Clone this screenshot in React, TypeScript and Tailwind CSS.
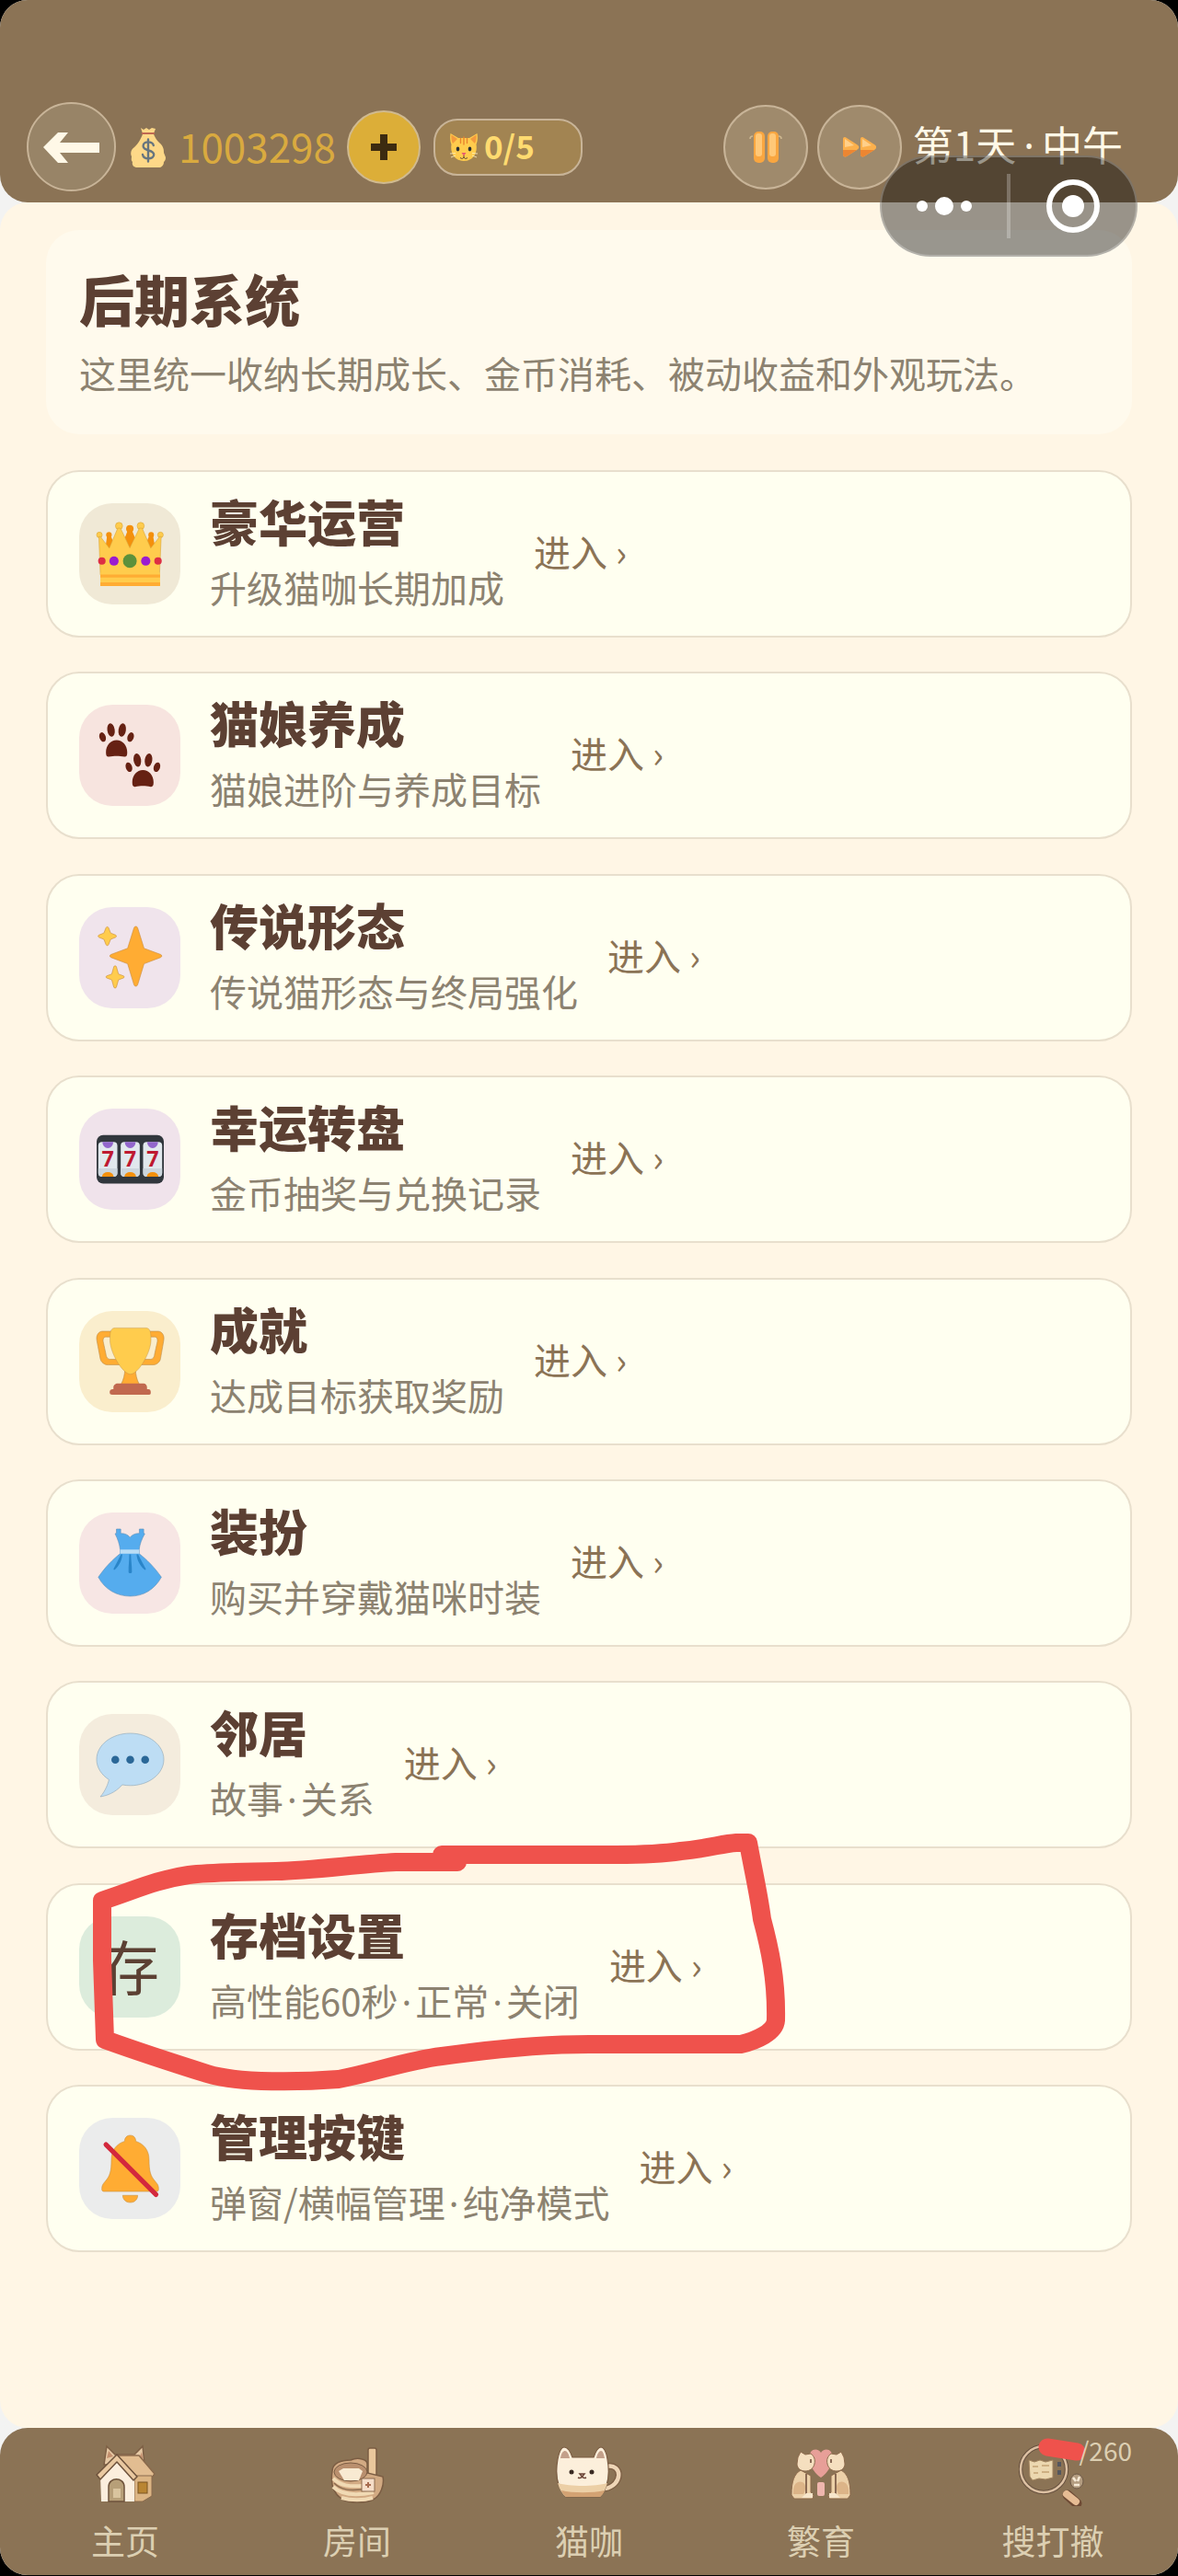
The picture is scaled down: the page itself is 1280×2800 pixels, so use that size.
import { Fragment, type ReactNode } from "react";

const Crown = () => (
  <svg viewBox="0 0 36 36" className="size-[73px] overflow-visible" aria-hidden="true">
    <g fill="#f4900c">
      <circle cx="6.6" cy="7.6" r="1.5" />
      <circle cx="17.8" cy="4.3" r="2" />
      <circle cx="29.2" cy="7.6" r="1.5" />
      <path d="M5.6 8h2l3 8H4.500zM16.700 5h2.200l4.500 11H12.500zM28.200 8h2l1.500 8h-7z" />
    </g>
    <g fill="#ffcc4d" stroke="#d9a63c" strokeWidth=".3">
      <circle cx="1.500" cy="7.600" r="1.500" />
      <circle cx="12" cy="2.800" r="1.900" />
      <circle cx="23.600" cy="2.800" r="1.900" />
      <circle cx="34.200" cy="7.600" r="1.500" />
      <path d="M1.200 8.500h.8l4.800 6.200L11.300 4h1.500l5 10.600L22.900 4h1.500l4.600 10.700 4.800-6.200h.8L33.700 29H2z" />
    </g>
    <rect x="2" y="27.500" width="32" height="7.500" rx=".8" fill="#ffcc4d" />
    <path d="M2 28.800h32v1.600H2zM2 33h32v2H2z" fill="#ffac33" />
    <g>
      <circle cx="2.800" cy="21.600" r="2" fill="#dd2e44" />
      <circle cx="9.300" cy="21.600" r="2.500" fill="#9b1bd0" />
      <circle cx="17.800" cy="21.600" r="3.700" fill="#5c913b" />
      <circle cx="26.300" cy="21.600" r="2.500" fill="#9b1bd0" />
      <circle cx="32.900" cy="21.600" r="2" fill="#dd2e44" />
    </g>
  </svg>
);

const PawPrint = () => (
  <>
    <ellipse cx="3.200" cy="8" rx="1.700" ry="2.600" transform="rotate(-18 3.200 8)" />
    <ellipse cx="7.700" cy="4.200" rx="2" ry="3.600" transform="rotate(-8 7.700 4.200)" />
    <ellipse cx="13.700" cy="4.200" rx="2" ry="3.600" transform="rotate(8 13.700 4.200)" />
    <ellipse cx="18.200" cy="8" rx="1.700" ry="2.600" transform="rotate(18 18.200 8)" />
    <path d="M10.700 9.600c-3.200 0-5.700 2.800-5.700 6.500 0 1.800.4 2.500 1.500 2.400 1.500-.1 2.700-.4 4.200-.4s2.700.3 4.200.4c1.100.1 1.500-.6 1.500-2.400 0-3.700-2.500-6.500-5.700-6.500z" />
  </>
);

const Paws = () => (
  <svg viewBox="0 0 36 36" className="size-[73px]" fill="#662113" aria-hidden="true">
    <PawPrint />
    <g transform="translate(14.100 16.100)">
      <PawPrint />
    </g>
  </svg>
);

const Sparkles = () => (
  <svg viewBox="0 0 36 36" className="size-[73px]" aria-hidden="true">
    <path
      fill="#ffac33"
      stroke="#c98a3a"
      strokeWidth=".3"
      d="M34.300 16.500l-8.900-3.300-3.400-10.900c-.3-1.100-1.700-1.100-2 0l-3.400 10.900-8.900 3.300c-.8.300-.8 1.300 0 1.600l8.900 3.400 3.400 11.200c.3 1.100 1.700 1.100 2 0l3.400-11.200 8.900-3.400c.8-.3.800-1.300 0-1.600z"
    />
    <g fill="#ffcc4d" stroke="#c98a3a" strokeWidth=".3">
      <path d="M10.200 6.100L7.500 5 6.400 2.200c-.3-.7-1.100-.7-1.400 0L3.900 5 1.200 6.100c-.5.200-.5 1 0 1.200l2.700 1.100L5 11.200c.3.700 1.100.7 1.400 0l1.100-2.800 2.700-1.100c.5-.2.500-1 0-1.200z" />
      <path d="M14.400 28l-2.700-1-1.100-3.900c-.2-.7-1.200-.7-1.400 0l-1.100 3.900-2.700 1c-.5.200-.5.900 0 1.100l2.700 1 1.100 3.900c.2.700 1.200.7 1.400 0l1.100-3.900 2.700-1c.5-.2.500-.9 0-1.100z" />
    </g>
  </svg>
);

const SlotReel = ({ x }: { x: number }) => (
  <g transform={`translate(${x} 8.500)`}>
    <rect width="10.200" height="18.600" rx="2" fill="#e1e8ed" />
    <path d="M0 14.200h10.200v2.400a2 2 0 0 1-2 2H2a2 2 0 0 1-2-2z" fill="#ccd6dd" />
    <path d="M2.200 0h5.800a2.900 3.300 0 0 1-5.800 0z" fill="#9266cc" />
    <path d="M2 18.600a3.100 2.400 0 0 1 6.200 0z" fill="#f4900c" />
    <text x="5.100" y="13.400" textAnchor="middle" fontSize="11.500" fontWeight="700" fill="#be1931" fontFamily="Open Sans, sans-serif">
      7
    </text>
  </g>
);

const Slots = () => (
  <svg viewBox="0 0 36 36" className="size-[73px]" aria-hidden="true">
    <rect y="4.800" width="36" height="26" rx="3.500" fill="#31373d" />
    <SlotReel x={0.9} />
    <SlotReel x={12.9} />
    <SlotReel x={24.9} />
  </svg>
);

const Trophy = () => (
  <svg viewBox="0 0 36 36" className="size-[73px] overflow-visible" aria-hidden="true">
    <path
      fill="#ffac33"
      stroke="#b98b4a"
      strokeWidth=".3"
      d="M5.123 5h6C12.227 5 13 4.896 13 6V4c0-1.104-.773-2-1.877-2h-8c-2 0-3.583 2.125-3 5 0 0 1.791 9.375 1.917 9.958C2.373 18.500 4.164 20 6.081 20h6.958c1.105 0-.039-1.896-.039-3v-2c0 1.104-.773 2-1.877 2h-4c-1.104 0-1.833-1.042-2-2S3.539 7.667 3.539 7.667C3.206 5.750 4.018 5 5.123 5zm25.812 0h-6C23.831 5 22 4.896 22 6V4c0-1.104 1.831-2 2.935-2h8c2 0 3.584 2.125 3 5 0 0-1.633 9.419-1.771 10-.354 1.500-2.042 3-4 3h-7.146C21.914 20 22 18.104 22 17v-2c0 1.104 1.831 2 2.935 2h4c1.104 0 1.834-1.042 2-2s1.584-7.333 1.584-7.333C32.851 5.750 32.040 5 30.935 5zM20.832 22c0-6.958-2.709 0-2.709 0s-3-6.958-3 0-3.291 10-3.291 10h12.292S20.832 28.958 20.832 22z"
    />
    <path
      fill="#ffcc4d"
      stroke="#b98b4a"
      strokeWidth=".2"
      d="M29.123 6.577c0 6.775-6.770 18.423-11 18.423-4.231 0-11-11.649-11-18.423C7.123 1.200 8 .2 10.123.2h16c2.100 0 3 1 3 6.377z"
    />
    <path
      fill="#c1694f"
      d="M27 33.500H9V32c0-1.104 1.164-2 2.206-2h13.917C26.165 30 27 30.896 27 32zM29 34.625c0 .76.165 1.375-1.252 1.375H8.498C7.206 36 7 35.385 7 34.625v-.25C7 33.615 7.738 33 8.498 33h19.250c.759 0 1.252.615 1.252 1.375z"
    />
  </svg>
);

const Dress = () => (
  <svg viewBox="0 0 36 36" className="size-[73px] overflow-visible" aria-hidden="true">
    <path
      fill="#55acee"
      stroke="#5b8fb8"
      strokeWidth=".3"
      d="M10.600 0h2.300v2.300c2.300 0 4 .8 5 2.200 1-1.400 2.700-2.200 5-2.200V0h2.300v2.200l.6.3c-1.700 3.100-2.700 5.600-3 8.500v2.200C27 16.500 31 20.500 34.700 25.800 31 32.500 25 36 18 36S4.500 32.500.9 25.800C4.500 20.500 8.500 16.500 12.600 13.200V11c-.3-2.900-1.200-5.400-2.700-8.500l.7-.3z"
    />
    <path fill="#bbddf5" d="M12.600 11h10.200v2.200H12.600z" />
    <path
      fill="#2a85c9"
      d="M13.800 13.500c-.3 3.500-1.800 6-4 8.200-.5.500-.9 0-.6-.6 1.300-2.500 2.600-5 3.800-7.600zM17.500 13.500h.9c0 3.500.6 6 .5 9.500 0 .9-1.800.9-1.800 0-.1-3.500.4-6 .4-9.500zM22.200 13.500H21.400c.3 3.500 1.900 6 4.200 8.200.5.500 1 0 .6-.6-1.300-2.500-2.700-5-4-7.600z"
    />
  </svg>
);

const Bubble = () => (
  <svg viewBox="0 0 36 36" className="size-[73px] overflow-visible" aria-hidden="true">
    <path
      fill="#bdddf4"
      stroke="#8fa6b5"
      strokeWidth=".3"
      d="M18 1C8.059 1 0 7.268 0 15c0 4.368 2.574 8.268 6.604 10.835C6.080 28.144 4.859 31.569 2 35c5.758-.96 9.439-3.761 11.716-6.416 1.376.262 2.805.416 4.284.416 9.941 0 18-6.268 18-14S27.941 1 18 1z"
    />
    <g fill="#2a6797">
      <circle cx="10" cy="15.200" r="2.100" />
      <circle cx="18" cy="15.200" r="2.100" />
      <circle cx="26" cy="15.200" r="2.100" />
    </g>
  </svg>
);

const BellOff = () => (
  <svg viewBox="0 0 36 36" className="size-[73px] overflow-visible" aria-hidden="true">
    <g fill="#ffac33" stroke="#c99245" strokeWidth=".3">
      <path d="M18 0c-1.900 0-3 1.400-3 3.200C10.800 4.500 7.900 8 7.900 13c0 6.500-.8 8.800-3.300 11.700C3.200 26.300 2.800 27 2.800 28.800c0 .9.400 1.300 1.200 1.300h28c.8 0 1.200-.4 1.200-1.300 0-1.800-.4-2.500-1.800-4.100-2.500-2.900-3.300-5.200-3.300-11.700 0-5-2.900-8.500-7.100-9.800C21 1.400 19.900 0 18 0z" />
      <path d="M14 32.200h8c0 2.200-1.600 3.800-4 3.800s-4-1.600-4-3.800z" />
    </g>
    <path d="M5 5l26.800 26.800" stroke="#d3293d" strokeWidth="2.600" strokeLinecap="round" />
  </svg>
);

const MoneyBag = () => (
  <svg viewBox="0 0 38 44" className="h-11 w-[38px] shrink-0" aria-hidden="true">
    <path d="M11 1l3 2 3-2 3 2 3-2 4 1-2 5H13z" fill="#fdd888" />
    <path d="M13 8h12c2 4 3 6 6 9 5 4 5 8 5 11l2 5c0 3-1 4-2 5 0 4-3 6-5 6H7c-3 0-6-2-5-6-2-2-1-4-1-6-2-4 0-8 3-10 5-5 7-9 9-14z" fill="#fdd888" />
    <path d="M12 6h14v2H12z" fill="#bf6952" />
    <path d="M19 13.500v24M24.800 20c-.6-2.500-3-3.600-5.800-3.600-3 0-5.400 1.600-5.400 4.300 0 6 11.600 3.600 11.600 9.400 0 2.600-2.600 4.200-6 4.200-3.300 0-5.600-1.500-6.200-4.300" fill="none" stroke="#67757f" strokeWidth="2.400" strokeLinecap="round" />
  </svg>
);

const CatFace = () => (
  <svg viewBox="0 0 32 32" className="size-8 shrink-0" aria-hidden="true">
    <path d="M1.500 1L10 6h12l8.500-5c.8 5 .3 9-1 12 1.500 9-3 18-13.500 18S1 22 2.500 13c-1.300-3-1.800-7-1-12z" fill="#ffcc4d" />
    <path d="M2.500 2.500L9 7l-5 5c-1.500-3-1.800-6-1.500-9.500zM29.500 2.500L23 7l5 5c1.500-3 1.800-6 1.500-9.500z" fill="#f39a3d" />
    <path d="M16 5v8M12.500 6.500v5M19.500 6.500v5" stroke="#e8842e" strokeWidth="1.400" strokeLinecap="round" />
    <ellipse cx="9.500" cy="18" rx="1.800" ry="2.400" fill="#292f33" />
    <ellipse cx="22.500" cy="18" rx="1.800" ry="2.400" fill="#292f33" />
    <path d="M13.500 22h5L16 25.500z" fill="#e75a70" />
    <path d="M16 25v2M12 27.500c2 1.500 3 1 4-.5 1 1.500 2 2 4 .5" fill="none" stroke="#5a4335" />
    <path d="M1 23l6-.500M2 27l5-2M31 23l-6-.500M30 27l-5-2" stroke="#fff3c4" strokeWidth=".8" />
  </svg>
);

const PauseIcon = () => (
  <svg viewBox="0 0 36 34" className="h-[34px] w-9" aria-hidden="true">
    <path d="M1 8c0-2 1-3 3-3M35 8c0-2-1-3-3-3" stroke="#cdb892" strokeWidth="1.500" fill="none" />
    <rect x="5" y="0" width="12" height="34" rx="5" fill="#f9a640" />
    <rect x="20" y="0" width="12" height="34" rx="5" fill="#f9a640" />
    <rect x="7" y="2" width="7" height="25" rx="3" fill="#ffc878" />
    <rect x="22" y="2" width="7" height="25" rx="3" fill="#ffc878" />
  </svg>
);

const ForwardIcon = () => (
  <svg viewBox="0 0 36 24" className="h-6 w-9" aria-hidden="true">
    <path d="M0 3c0-2 2-3 4-1l11 7c3 2 3 4 0 6L4 22c-2 1-4 0-4-2z" fill="#fcb04c" />
    <path d="M19 3c0-2 2-3 4-1l11 7c3 2 3 4 0 6l-11 7c-2 1-4 0-4-2z" fill="#fcb04c" />
    <path d="M0 15h15L4 22c-2 1-4 0-4-2zM19 15h15l-11 7c-2 1-4 0-4-2z" fill="#ec8632" />
    <path d="M2 3l10 7-10 2zM21 3l10 7-10 2z" fill="#ffd08a" />
  </svg>
);

const HouseIcon = () => (
  <svg viewBox="0 0 66 64" className="h-16 w-[66px]" aria-hidden="true">
    <path d="M10 22L13 2l9 9h21l9-9 2 20z" fill="#e6c9a5" stroke="#7d5f45" strokeWidth="1.500" />
    <path d="M13 15l2-8 5 6zM47 18l4-10 2 12z" fill="#c38f6e" />
    <path d="M24 12h24l17 20-4 5H40z" fill="#e2bd91" stroke="#8a6a4c" strokeWidth="1.500" />
    <path d="M43 34h19v22l-10 6h-9z" fill="#dcb584" stroke="#8a6a4c" />
    <path d="M6 34L24 15l19 19v28H7z" fill="#fbeedd" />
    <path d="M2 33L24 11l22 24-4 4-18-20L6 38z" fill="#e9c8a0" stroke="#6e533c" strokeWidth="1.500" strokeLinejoin="round" />
    <path d="M15 62V46c0-11 17-11 17 0v16z" fill="#b79f78" stroke="#6e533c" strokeWidth="1.500" />
    <path d="M20 48h8v10h-8z" fill="#d9c49e" />
    <rect x="47" y="41" width="10" height="12" fill="#b98532" stroke="#7b5523" />
  </svg>
);

const BowlIcon = () => (
  <svg viewBox="0 0 60 64" className="h-16 w-[60px]" aria-hidden="true">
    <rect x="42" y="4" width="9" height="34" rx="2" fill="#e9c79c" stroke="#7b5d43" strokeWidth="1.500" />
    <path d="M3 29c0-9 10-12 20-12 9-4 18 0 18 4v10l17 4c2 10-3 20-9 24-8 5-28 5-36 0C4 53 1 42 3 29z" fill="#d2aa83" stroke="#7b5d43" strokeWidth="1.500" />
    <ellipse cx="23" cy="30" rx="18" ry="10" fill="#b98f6e" stroke="#7b5d43" />
    <path d="M10 29l5-3h17l4 3-4 10H16z" fill="#f8ead2" />
    <path d="M4 37c8 8 18 9 32 8M4 46c8 8 24 10 44 6M13 58c10 3 24 3 34 0" fill="none" stroke="#f1dab4" strokeWidth="4" />
    <path d="M5 42c8 8 17 8 30 7" fill="none" stroke="#8b6b4e" strokeWidth="1.500" />
    <rect x="35" y="37" width="14" height="14" fill="#f5ddc8" stroke="#8b6b4e" />
    <path d="M42 41v6M39 44h6" stroke="#a86c50" strokeWidth="2" />
  </svg>
);

const CupIcon = () => (
  <svg viewBox="0 0 74 60" className="h-[60px] w-[74px]" aria-hidden="true">
    <path d="M56 22c18-4 18 21-2 24" fill="none" stroke="#7b5d43" strokeWidth="7" />
    <path d="M56 22c18-4 18 21-2 24" fill="none" stroke="#eed5b6" strokeWidth="4.500" />
    <path d="M3 14C5 4 8 1 10 1c4 0 7 5 9 11h23c2-6 5-11 8-11s6 5 7 13c3 17 0 32-8 41H12C3 46 0 31 3 14z" fill="#fcefdb" stroke="#7b5d43" strokeWidth="1.200" />
    <path d="M6 13c1-6 3-8 5-8s4 3 5 8zM45 13c1-5 3-8 5-8s3 3 4 8z" fill="#c3a08a" />
    <path d="M3 40c14 4 40 4 54 0-2 7-5 12-8 15H12c-4-3-7-8-9-15z" fill="#eccfa6" />
    <path d="M7 48c12 3 34 3 47 0-1 3-3 5-5 7H12c-2-2-4-4-5-7z" fill="#d3a273" />
    <circle cx="18" cy="28" r="2.500" fill="#3a2a22" />
    <circle cx="40" cy="28" r="2.500" fill="#3a2a22" />
    <path d="M27 30h5l-2.500 3zM25 34c2 1 3 1 4.500-1 1.500 2 2.500 2 4.500 1" fill="none" stroke="#6b4436" strokeWidth="1.500" />
  </svg>
);

const PairIcon = () => (
  <svg viewBox="0 0 68 56" className="h-14 w-[68px]" aria-hidden="true">
    <path d="M34 32C22 24 20 10 23 4c3-4 9-3 11 1 2-4 8-5 11-1 3 6 1 20-11 28z" fill="#e79f98" />
    <rect x="30" y="37" width="8" height="15" rx="2" fill="#efb6ae" />
    {["translate(0 0)", "translate(68 0) scale(-1 1)"].map((flip) => (
      <g key={flip} transform={flip}>
        <path d="M12 24c-7 4-10 12-10 27l3 4h20l1-4-3-3V30z" fill="#ecd0a8" stroke="#8d6b4d" />
        <path d="M9 10l3-6 5 3 6-1c4 3 5 7 4 11-1 5-5 8-10 8-6 0-9-4-9-8z" fill="#f5dfbf" stroke="#8d6b4d" />
        <path d="M4 46c0-7 5-11 10-9 4 2 4 8 1 13H4z" fill="#dcb488" />
        <path d="M23 12v4M18 28v22" stroke="#6b4a38" strokeWidth="1.500" />
        <path d="M13 54h12v-5h-7z" fill="#f7e6cb" />
      </g>
    ))}
  </svg>
);

const SearchIcon = () => (
  <svg viewBox="0 0 74 70" className="h-[70px] w-[74px]" aria-hidden="true">
    <circle cx="27" cy="30" r="25" fill="none" stroke="#66503e" strokeWidth="4.500" />
    <circle cx="27" cy="30" r="25" fill="none" stroke="#dcc0a2" strokeWidth="2.500" />
    <path d="M11 20l6 2 6-2 6 2 8-2v19l-8 2-7-1-7 2-3-4z" fill="#ecd8b0" stroke="#a38560" />
    <path d="M15 27h6M25 26h8M16 34h5M25 33h8" stroke="#c2a274" strokeWidth="1.500" />
    <path d="M42 22h4v5h-4zM42 31h4v5h-4z" fill="#55575d" />
    <ellipse cx="63" cy="43" rx="7" ry="8" fill="#b39c80" stroke="#6e5a47" />
    <path d="M59 39l3 4M66 38l-2 5M60 47h6" stroke="#f6ead6" strokeWidth="2.500" />
    <path d="M53 58l10 9" stroke="#6e4a34" strokeWidth="11" strokeLinecap="round" />
    <path d="M52 57l10 8" stroke="#e6bc94" strokeWidth="8" strokeLinecap="round" />
  </svg>
);

const DottedText = ({ text, gap }: { text: string; gap: string }) => (
  <>
    {text.split("·").map((part, i) => (
      <Fragment key={i}>
        {i > 0 && <span className={`font-['Noto_Sans',sans-serif] leading-none ${gap}`}>·</span>}
        {part}
      </Fragment>
    ))}
  </>
);

type Entry = { title: string; desc: string; tile: string; icon: ReactNode; marked?: boolean };

const entries: Entry[] = [
  { title: "豪华运营", desc: "升级猫咖长期加成", tile: "bg-[#f0e9d6]", icon: <Crown /> },
  { title: "猫娘养成", desc: "猫娘进阶与养成目标", tile: "bg-[#f7e4df]", icon: <Paws /> },
  { title: "传说形态", desc: "传说猫形态与终局强化", tile: "bg-[#f0e4ec]", icon: <Sparkles /> },
  { title: "幸运转盘", desc: "金币抽奖与兑换记录", tile: "bg-[#f0e3eb]", icon: <Slots /> },
  { title: "成就", desc: "达成目标获取奖励", tile: "bg-[#faeecd]", icon: <Trophy /> },
  { title: "装扮", desc: "购买并穿戴猫咪时装", tile: "bg-[#f7e6e4]", icon: <Dress /> },
  { title: "邻居", desc: "故事·关系", tile: "bg-[#f4ecdd]", icon: <Bubble /> },
  {
    title: "存档设置",
    desc: "高性能60秒·正常·关闭",
    tile: "bg-[#dcecdc]",
    icon: <span className="pb-1.5 text-[64px] leading-none text-[#5c4033]">存</span>,
    marked: true,
  },
  { title: "管理按键", desc: "弹窗/横幅管理·纯净模式", tile: "bg-[#ebecec]", icon: <BellOff /> },
];

const Marker = () => (
  <svg
    viewBox="90 1980 770 300"
    className="pointer-events-none absolute -top-[68px] left-[38px] z-10 h-[300px] w-[770px]"
    fill="none"
    stroke="#ef524c"
    strokeWidth="20"
    strokeLinecap="round"
    strokeLinejoin="round"
    aria-hidden="true"
  >
    <path d="M497 2023H430C390 2025 340 2032 300 2033C260 2034 230 2034 205 2037C170 2042 145 2054 111 2065V2130L114 2216C150 2229 190 2242 225 2253C260 2264 330 2262 368 2259C410 2251 440 2239 480 2234C530 2227 590 2221 640 2221H805C822 2217 842 2208 843 2195C844 2150 836 2115 828 2085C824 2055 818 2030 813 2002H800C785 2003 770 2008 740 2011C720 2014 700 2015 670 2015H480" />
  </svg>
);

const EntryCard = ({ title, desc, tile, icon, marked }: Entry) => (
  <li className="relative flex h-[182px] items-center gap-8 rounded-[36px] border-2 border-[#e8dfcd] bg-[#fffff0] px-[34px]">
    <div className={`flex size-[110px] shrink-0 items-center justify-center rounded-[36px] ${tile}`}>{icon}</div>
    <div>
      <h2 className="text-[53px] leading-[72px] font-black text-[#5c4033]">{title}</h2>
      <p className="text-[40px] leading-[72px] text-[#8c8270]">
        <DottedText text={desc} gap="px-1" />
      </p>
    </div>
    <button type="button" className="pb-1.5 text-[40px] text-[#8b7355]" aria-label={`进入${title}`}>
      进入 ›
    </button>
    {marked && <Marker />}
  </li>
);

const tabs: { label: string; icon: ReactNode; badge?: string }[] = [
  { label: "主页", icon: <HouseIcon /> },
  { label: "房间", icon: <BowlIcon /> },
  { label: "猫咖", icon: <CupIcon /> },
  { label: "繁育", icon: <PairIcon /> },
  { label: "搜打撤", icon: <SearchIcon />, badge: "/260" },
];

export default function App() {
  return (
    <div className="bg-black pb-px font-['Noto_Sans_CJK_SC',sans-serif]">
      <div className="relative flex min-h-[calc(100vh-1px)] flex-col overflow-hidden rounded-[30px] bg-[#f3f3f2]">
        <header className="flex items-center rounded-b-[30px] bg-[#8b7355] pt-[111px] pr-[60px] pb-3 pl-[29px]">
          <button
            type="button"
            aria-label="返回"
            className="mr-4 flex size-[97px] shrink-0 items-center justify-center rounded-full border-2 border-[#c8b498] bg-[#988467]"
          >
            <svg viewBox="0 0 62 34" className="h-[34px] w-[62px]" fill="#fff8e7" aria-hidden="true">
              <path d="M0 17L16 1h11L18 12h43v11H18l9 11H16z" />
            </svg>
          </button>
          <MoneyBag />
          <span className="ml-3.5 pb-1 text-[44px] leading-none text-[#d9aa3f]">1003298</span>
          <button
            type="button"
            aria-label="增加金币"
            className="ml-3 flex size-20 shrink-0 items-center justify-center rounded-full border-2 border-[#d0ba90] bg-[#dcae38]"
          >
            <svg viewBox="0 0 28 28" className="size-7" fill="#3d2b10" aria-hidden="true">
              <path d="M10 0h8v10h10v8H18v10h-8V18H0v-8h10z" />
            </svg>
          </button>
          <div className="ml-3.5 flex h-[62px] w-[162px] items-center gap-1.5 rounded-[26px] border-2 border-[#c8b498] bg-[#a28452] pl-[15px]">
            <CatFace />
            <span className="pb-1 text-[35px] leading-none font-bold text-[#ffdb70]">0/5</span>
          </div>
          <button
            type="button"
            aria-label="暂停"
            className="ml-auto flex size-[92px] shrink-0 items-center justify-center rounded-full border-2 border-[#c8b498] bg-[#9f8a6c]"
          >
            <PauseIcon />
          </button>
          <button
            type="button"
            aria-label="快进"
            className="ml-2.5 flex size-[92px] shrink-0 items-center justify-center rounded-full border-2 border-[#c8b498] bg-[#9f8a6c]"
          >
            <ForwardIcon />
          </button>
          <span className="ml-3 pb-1.5 text-[44px] leading-none text-[#fff8e7]">
            <DottedText text="第1天·中午" gap="px-2" />
          </span>
        </header>

        <div className="absolute top-[169px] right-11 z-20 flex h-[110px] w-[280px] items-center rounded-full border-2 border-white/25 bg-black/40">
          <button type="button" aria-label="更多" className="flex h-full flex-1 items-center justify-center gap-2">
            <span className="size-3 rounded-full bg-white" />
            <span className="size-5 rounded-full bg-white" />
            <span className="size-3 rounded-full bg-white" />
          </button>
          <span className="h-[70px] w-1 bg-white/25" />
          <button type="button" aria-label="关闭小程序" className="flex h-full flex-1 items-center justify-center">
            <span className="flex size-[58px] items-center justify-center rounded-full border-[6px] border-white">
              <span className="size-6 rounded-full bg-white" />
            </span>
          </button>
        </div>

        <main className="flex flex-1 flex-col rounded-[30px] bg-[#fff6e5] px-[50px] pt-[30px] pb-[191px]">
          <section className="rounded-[36px] bg-[#fffaed] px-9 pt-[30px] pb-[30px]">
            <h1 className="text-[60px] leading-[88px] font-black text-[#5c4033]">后期系统</h1>
            <p className="text-[40px] leading-[74px] text-[#8c8270]">
              这里统一收纳长期成长、金币消耗、被动收益和外观玩法。
            </p>
          </section>
          <ul className="mt-[39px] flex flex-1 flex-col justify-between gap-9">
            {entries.map((entry) => (
              <EntryCard key={entry.title} {...entry} />
            ))}
          </ul>
        </main>

        <nav className="flex rounded-t-[30px] bg-[#8b7355] px-2.5">
          {tabs.map(({ label, icon, badge }) => (
            <a key={label} href="#" className="relative flex h-40 flex-1 flex-col items-center pt-3">
              <span className="flex h-[76px] items-center">{icon}</span>
              <span className="mt-1 text-[37px] leading-[60px] text-[#dccfb2]">{label}</span>
              {badge && (
                <span className="absolute top-2.5 right-10 flex items-center">
                  <svg viewBox="0 0 52 26" className="-mr-2 h-[26px] w-[52px]" aria-hidden="true">
                    <path d="M10 10L42 15" stroke="#ef524c" strokeWidth="19" strokeLinecap="round" />
                  </svg>
                  <span className="text-[28px] leading-7 text-[#dccfb2]">{badge}</span>
                </span>
              )}
            </a>
          ))}
        </nav>
      </div>
    </div>
  );
}
